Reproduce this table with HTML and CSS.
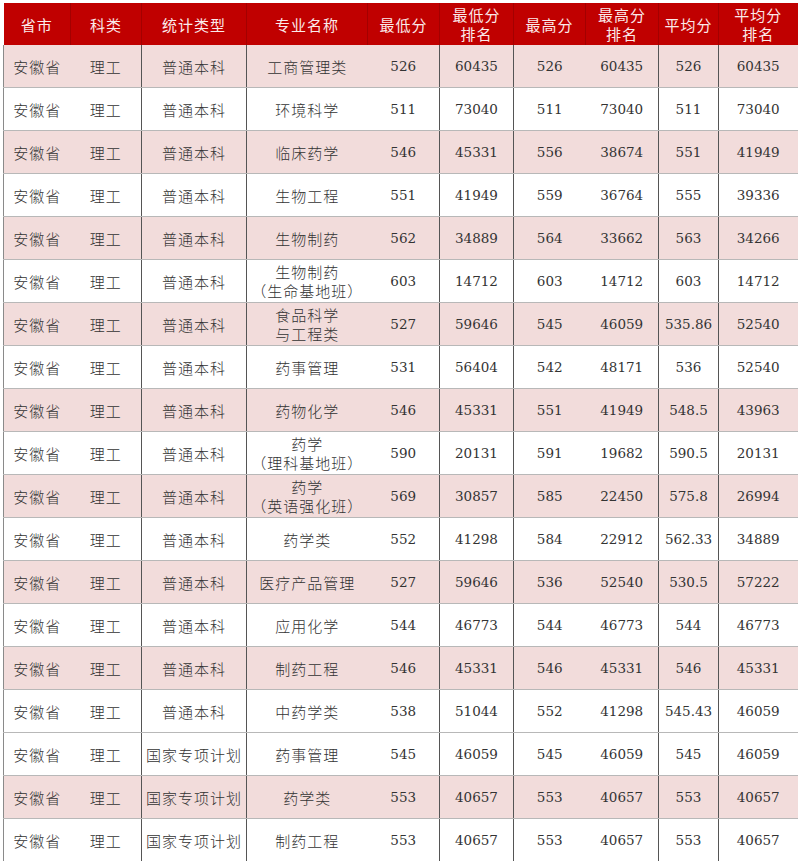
FILE: index.html
```html
<!DOCTYPE html>
<html>
<head>
<meta charset="utf-8">
<title>录取分数</title>
<link rel="stylesheet" href="styles.css">
</head>
<body>
<table class="score">
<colgroup>
<col class="c1"><col class="c2"><col class="c3"><col class="c4"><col class="c5">
<col class="c6"><col class="c7"><col class="c8"><col class="c9"><col class="c10">
</colgroup>
<thead>
<tr>
<th>省市</th><th>科类</th><th>统计类型</th><th>专业名称</th><th>最低分</th>
<th>最低分<br>排名</th><th>最高分</th><th>最高分<br>排名</th><th>平均分</th><th>平均分<br>排名</th>
</tr>
</thead>
<tbody>
<tr class="pink"><td class="first">安徽省</td><td>理工</td><td class="vl">普通本科</td><td class="vl">工商管理类</td><td class="num">526</td><td class="vl num">60435</td><td class="vl num">526</td><td class="num">60435</td><td class="vl num">526</td><td class="vl num">60435</td></tr>
<tr><td class="first">安徽省</td><td>理工</td><td class="vl">普通本科</td><td class="vl">环境科学</td><td class="num">511</td><td class="vl num">73040</td><td class="vl num">511</td><td class="num">73040</td><td class="vl num">511</td><td class="vl num">73040</td></tr>
<tr class="pink"><td class="first">安徽省</td><td>理工</td><td class="vl">普通本科</td><td class="vl">临床药学</td><td class="num">546</td><td class="vl num">45331</td><td class="vl num">556</td><td class="num">38674</td><td class="vl num">551</td><td class="vl num">41949</td></tr>
<tr><td class="first">安徽省</td><td>理工</td><td class="vl">普通本科</td><td class="vl">生物工程</td><td class="num">551</td><td class="vl num">41949</td><td class="vl num">559</td><td class="num">36764</td><td class="vl num">555</td><td class="vl num">39336</td></tr>
<tr class="pink"><td class="first">安徽省</td><td>理工</td><td class="vl">普通本科</td><td class="vl">生物制药</td><td class="num">562</td><td class="vl num">34889</td><td class="vl num">564</td><td class="num">33662</td><td class="vl num">563</td><td class="vl num">34266</td></tr>
<tr><td class="first">安徽省</td><td>理工</td><td class="vl">普通本科</td><td class="vl">生物制药<br>（生命基地班）</td><td class="num">603</td><td class="vl num">14712</td><td class="vl num">603</td><td class="num">14712</td><td class="vl num">603</td><td class="vl num">14712</td></tr>
<tr class="pink"><td class="first">安徽省</td><td>理工</td><td class="vl">普通本科</td><td class="vl">食品科学<br>与工程类</td><td class="num">527</td><td class="vl num">59646</td><td class="vl num">545</td><td class="num">46059</td><td class="vl num">535.86</td><td class="vl num">52540</td></tr>
<tr><td class="first">安徽省</td><td>理工</td><td class="vl">普通本科</td><td class="vl">药事管理</td><td class="num">531</td><td class="vl num">56404</td><td class="vl num">542</td><td class="num">48171</td><td class="vl num">536</td><td class="vl num">52540</td></tr>
<tr class="pink"><td class="first">安徽省</td><td>理工</td><td class="vl">普通本科</td><td class="vl">药物化学</td><td class="num">546</td><td class="vl num">45331</td><td class="vl num">551</td><td class="num">41949</td><td class="vl num">548.5</td><td class="vl num">43963</td></tr>
<tr><td class="first">安徽省</td><td>理工</td><td class="vl">普通本科</td><td class="vl">药学<br>（理科基地班）</td><td class="num">590</td><td class="vl num">20131</td><td class="vl num">591</td><td class="num">19682</td><td class="vl num">590.5</td><td class="vl num">20131</td></tr>
<tr class="pink"><td class="first">安徽省</td><td>理工</td><td class="vl">普通本科</td><td class="vl">药学<br>（英语强化班）</td><td class="num">569</td><td class="vl num">30857</td><td class="vl num">585</td><td class="num">22450</td><td class="vl num">575.8</td><td class="vl num">26994</td></tr>
<tr><td class="first">安徽省</td><td>理工</td><td class="vl">普通本科</td><td class="vl">药学类</td><td class="num">552</td><td class="vl num">41298</td><td class="vl num">584</td><td class="num">22912</td><td class="vl num">562.33</td><td class="vl num">34889</td></tr>
<tr class="pink"><td class="first">安徽省</td><td>理工</td><td class="vl">普通本科</td><td class="vl">医疗产品管理</td><td class="num">527</td><td class="vl num">59646</td><td class="vl num">536</td><td class="num">52540</td><td class="vl num">530.5</td><td class="vl num">57222</td></tr>
<tr><td class="first">安徽省</td><td>理工</td><td class="vl">普通本科</td><td class="vl">应用化学</td><td class="num">544</td><td class="vl num">46773</td><td class="vl num">544</td><td class="num">46773</td><td class="vl num">544</td><td class="vl num">46773</td></tr>
<tr class="pink"><td class="first">安徽省</td><td>理工</td><td class="vl">普通本科</td><td class="vl">制药工程</td><td class="num">546</td><td class="vl num">45331</td><td class="vl num">546</td><td class="num">45331</td><td class="vl num">546</td><td class="vl num">45331</td></tr>
<tr><td class="first">安徽省</td><td>理工</td><td class="vl">普通本科</td><td class="vl">中药学类</td><td class="num">538</td><td class="vl num">51044</td><td class="vl num">552</td><td class="num">41298</td><td class="vl num">545.43</td><td class="vl num">46059</td></tr>
<tr><td class="first">安徽省</td><td>理工</td><td class="vl">国家专项计划</td><td class="vl">药事管理</td><td class="num">545</td><td class="vl num">46059</td><td class="vl num">545</td><td class="num">46059</td><td class="vl num">545</td><td class="vl num">46059</td></tr>
<tr class="pink"><td class="first">安徽省</td><td>理工</td><td class="vl">国家专项计划</td><td class="vl">药学类</td><td class="num">553</td><td class="vl num">40657</td><td class="vl num">553</td><td class="num">40657</td><td class="vl num">553</td><td class="vl num">40657</td></tr>
<tr><td class="first">安徽省</td><td>理工</td><td class="vl">国家专项计划</td><td class="vl">制药工程</td><td class="num">553</td><td class="vl num">40657</td><td class="vl num">553</td><td class="num">40657</td><td class="vl num">553</td><td class="vl num">40657</td></tr>
</tbody>
</table>
</body>
</html>
```

FILE: styles.css
```css
html, body {
  margin: 0;
  padding: 0;
  background: #ffffff;
}

body {
  padding: 3px 0 0 3px;
  font-family: "Noto Sans CJK SC", sans-serif;
  color: #333333;
}

.score {
  width: 794px;
  border-collapse: collapse;
  table-layout: fixed;
}

.c1 { width: 67px; }
.c2 { width: 71px; }
.c3 { width: 105px; }
.c4 { width: 121px; }
.c5 { width: 72px; }
.c6 { width: 74px; }
.c7 { width: 72px; }
.c8 { width: 73px; }
.c9 { width: 60px; }
.c10 { width: 79px; }

.score th {
  background: #c00000;
  color: #fbeaea;
  font-weight: 400;
  font-size: 15px;
  line-height: 19px;
  height: 42px;
  padding: 0;
  text-align: center;
  vertical-align: middle;
  letter-spacing: 1px;
  border-left: 1px solid #a30000;
}

.score th:first-child {
  border-left: none;
}

.score td {
  font-size: 15px;
  font-weight: 300;
  line-height: 19px;
  height: 42px;
  padding: 0;
  text-align: center;
  vertical-align: middle;
  border-bottom: 1px solid #b8b8b8;
  letter-spacing: 1px;
}

.score .num {
  font-family: "DejaVu Serif", "Liberation Serif", serif;
  font-weight: 400;
  font-size: 13.5px;
  letter-spacing: 0;
  color: #333333;
}

.score tr.pink td {
  background: #f2dcdb;
}

.score td.first {
  border-left: 1px solid #8a8a8a;
}

.score td.vl {
  border-left: 1px solid #555555;
}
```
